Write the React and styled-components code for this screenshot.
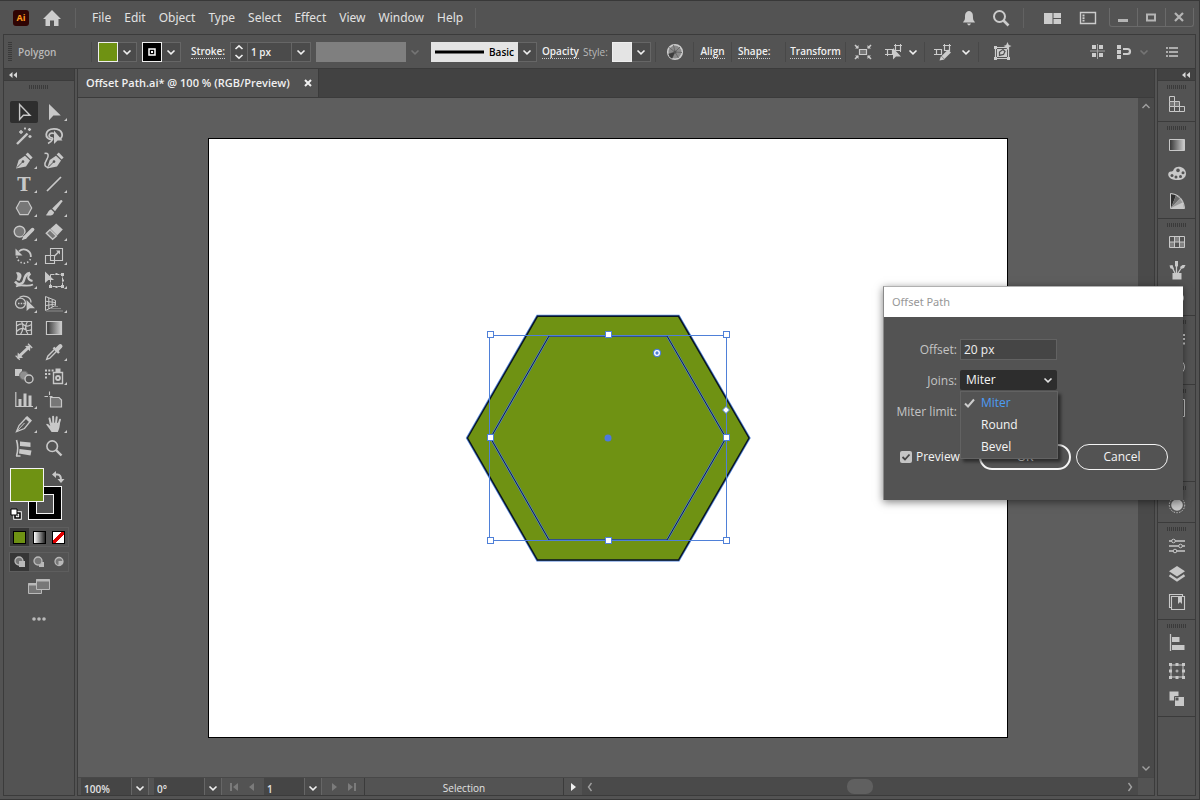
import React from "react";
import styled, { createGlobalStyle, css } from "styled-components";

const GlobalStyle = createGlobalStyle`
    * {
        box-sizing: border-box;
    }

    body {
        margin: 0;
        background-color: #535353;
        color: #e2e2e2;
        font-family: "Open Sans", "Noto Sans", sans-serif;
        font-size: 11px;
        line-height: 16px;
    }

    button, input, select {
        font: inherit;
        color: inherit;
        margin: 0;
        padding: 0;
        border: none;
        border-radius: 0;
        background: none;
        outline: none;
    }
`

const line = "#3b3b3b"
const edge = "#666666"
const field = "#454545"
const olive = "#6f9213"
const blue = "#4f80d8"

const Window = styled.div`
    position: relative;
    display: flex;
    flex-direction: column;
    min-height: 100vh;
    padding-bottom: 3px;
    border-top: 1px solid #383838;
    border-right: 1px solid #383838;
    border-bottom: 1px solid #383838;
    background-color: #535353;
    overflow: hidden;
`

const Svg = styled.svg`
    display: block;
    flex: none;
    fill: none;
    stroke: currentColor;

    .f {
        fill: currentColor;
        stroke: none;
    }

    .d {
        fill: #777777;
    }

    .k {
        fill: #535353;
        stroke: none;
    }
`

const Icon = ({ w = 20, h = 20, children }) => (
    <Svg width={w} height={h} viewBox={`0 0 ${w} ${h}`} aria-hidden="true">{children}</Svg>
)

const Chevron = () => (
    <Icon w={10} h={10}><path d="M1.5 3.5 5 6.8 8.5 3.5" strokeWidth="1.6" /></Icon>
)

/* menu bar */

const MenuBar = styled.header`
    display: flex;
    align-items: center;
    height: 33px;
    padding-left: 13px;
`

const Logo = styled.div`
    width: 16px;
    height: 16px;
    border-radius: 3px;
    background-color: #2f0403;
    color: #ff9a1f;
    font-size: 9px;
    font-weight: 700;
    text-align: center;
`

const IconButton = styled.button`
    display: flex;
    align-items: center;
    justify-content: center;
    width: 20px;
    height: 20px;
    flex: none;
    color: #cccccc;
`

const HomeButton = styled(IconButton)`
    margin: 0 13px 0 13px;
`

const Rule = styled.span`
    width: 1px;
    height: 20px;
    flex: none;
    background-color: ${props => props.$dark ? "#484848" : "#626262"};
`

const Menus = styled.nav`
    display: flex;
    gap: 13px;
    padding: 0 12px 0 16px;

    button {
        font-family: "Noto Sans", sans-serif;
        font-size: 12px;
    }
`

const MenuRight = styled.div`
    display: flex;
    align-items: center;
    margin-left: auto;
`

const Spacer = styled.span`
    width: ${props => props.$w}px;
    flex: none;
`

const WindowButtons = styled.div`
    display: flex;
    align-self: flex-start;
    margin-right: 5px;
    border: 1px solid #6a6a6a;
    border-top: none;
    border-radius: 0 0 3px 3px;

    button {
        width: 27px;
        height: 18px;
        color: #b4b4b4;
    }

    button + button {
        width: 28px;
        border-left: 1px solid #6a6a6a;
    }
`

/* control bar */

const ControlBar = styled.div`
    display: flex;
    align-items: center;
    height: 35px;
    margin: 0 3px;
    border: 1px solid ${line};
    font-size: 10px;
    font-weight: 600;
`

const Grip = styled.span`
    flex: none;
    ${props => props.$vertical ? css`
        width: 4px;
        height: 20px;
        background: repeating-linear-gradient(#3a3a3a 0 1px, transparent 1px 2px);
    ` : css`
        width: 20px;
        height: 4px;
        background: repeating-linear-gradient(90deg, #3a3a3a 0 1px, transparent 1px 2px);
    `}
`

const Cell = styled.div`
    display: flex;
    align-items: center;
    justify-content: ${props => props.$center ? "center" : "flex-start"};
    width: ${props => props.$w}px;
    flex: none;
    white-space: nowrap;
`

const Muted = styled.span`
    color: #b9b9b9;
    font-weight: ${props => props.$light ? 400 : 600};
`

const LinkLabel = styled.a`
    color: #f0f0f0;
    text-decoration: none;
    line-height: 13px;
    border-bottom: 1px dotted #c8c8c8;
`

const Combo = styled.div`
    display: flex;
    height: 20px;
    border: 1px solid ${edge};
    background-color: #4b4b4b;
`

const Drop = styled.button`
    display: flex;
    align-items: center;
    justify-content: center;
    width: 18px;
    flex: none;
    color: ${props => props.$dim ? "#757575" : "#f0f0f0"};
`

const Swatch = styled.button`
    display: flex;
    align-items: center;
    justify-content: center;
    width: 20px;
    height: 20px;
    margin: -1px 0 0 -1px;
    border: 1px solid #eeeeee;
    background-color: ${props => props.$color};
`

const ValueInput = styled.input`
    width: ${props => props.$w}px;
    padding-left: 3px;
    border: solid ${edge};
    border-width: 0 1px;
    color: #f0f0f0;
`

const Stepper = styled(Drop)`
    width: 16px;
`

const Profile = styled.div`
    width: 90px;
    height: 20px;
    background-color: #7f7f7f;
`

const BrushButton = styled.button`
    display: flex;
    align-items: center;
    width: 87px;
    height: 20px;
    gap: 5px;
    padding-left: 4px;
    margin: -1px 0 0 -1px;
    background-color: #e4e4e4;
    color: #000000;
`

const BarEnd = styled.div`
    display: flex;
    align-items: center;
    margin-left: auto;
    padding-right: 13px;
`

/* work area */

const Body = styled.div`
    display: flex;
    flex: 1;
    gap: 2px;
    margin: 0 3px;
`

const Panel = styled.aside`
    display: flex;
    flex-direction: column;
    width: ${props => props.$w}px;
    flex: none;
    border: solid ${line};
    border-width: 0 1px 1px;
`

const PanelHead = styled.div`
    display: flex;
    align-items: center;
    justify-content: ${props => props.$end ? "flex-end" : "flex-start"};
    height: 12px;
    padding: 0 4px;
    background-color: #424242;
    border-bottom: 1px solid ${line};
    color: #d8d8d8;
`

const ToolsInner = styled.div`
    display: flex;
    flex-direction: column;
    align-items: center;
    padding-top: 4px;
`

const ToolGrid = styled.div`
    display: grid;
    grid-template-columns: 28px 28px;
    gap: 2px;
    margin-top: 12px;
`

const Tool = styled.button`
    width: 28px;
    height: 22px;
    border-radius: 2px;
    background-color: ${props => props.$on ? "#2e2e2e" : "transparent"};
    color: #c8c8c8;
`

const Paints = styled.div`
    display: grid;
    grid-template-columns: 18px 16px 18px;
    grid-template-rows: 18px 16px 18px;
    align-self: flex-start;
    margin: 9px 0 2px 6px;
    color: #c8c8c8;
`

const FillPaint = styled.button`
    grid-area: 1 / 1 / 3 / 3;
    z-index: 1;
    border: 1px solid #f4f4f4;
    background-color: ${olive};
`

const StrokePaint = styled.button`
    grid-area: 2 / 2 / 4 / 4;
    border: 1px solid #f4f4f4;
    background-color: #000000;
    padding: 7px;

    &::after {
        content: "";
        display: block;
        height: 18px;
        border: 1px solid #f4f4f4;
        background-color: #535353;
    }
`

const SwapPaint = styled.button`
    grid-area: 1 / 3;
    padding-left: 8px;
`

const ResetPaint = styled.button`
    grid-area: 3 / 1;
    align-self: end;
    justify-self: start;
`

const ModeRow = styled.div`
    display: grid;
    grid-template-columns: 19px 20px 19px;
    height: 20px;
    margin-top: 5px;
    border: 1px solid #5e5e5e;
`

const Mode = styled.button`
    display: flex;
    align-items: center;
    justify-content: center;
    background-color: ${props => props.$on ? "#363636" : "transparent"};
    color: #b9b9b9;
`

const Chip = styled.span`
    width: 13px;
    height: 13px;
    border: 1px solid #000000;
    background: ${props => props.$bg};
`

const Extra = styled(Mode)`
    height: 20px;
    margin-top: ${props => props.$gap}px;
`

const Document = styled.main`
    display: flex;
    flex-direction: column;
    flex: 1;
    min-width: 0;
    border: 1px solid ${line};
    border-top: none;
`

const Tabs = styled.div`
    display: flex;
    height: 29px;
    background-color: #424242;
    border-bottom: 1px solid ${line};
`

const Tab = styled.div`
    display: flex;
    align-items: center;
    justify-content: space-between;
    width: 241px;
    padding: 0 2px 0 8px;
    background-color: #535353;
    border-right: 1px solid ${line};
    color: #f0f0f0;
    font-weight: 600;
    white-space: nowrap;

    button {
        padding: 0 4px;
    }
`

const Stage = styled.div`
    display: flex;
    flex: 1;
`

const Canvas = styled.div`
    display: flex;
    align-items: center;
    justify-content: center;
    flex: 1;
    min-width: 0;
    background-color: #5e5e5e;
`

const Artboard = styled.div`
    width: 800px;
    max-width: 90%;
    background-color: #ffffff;
    border: 1px solid #000000;

    svg {
        display: block;
        width: 100%;
        height: auto;
    }
`

const VScroll = styled.div`
    display: flex;
    flex-direction: column;
    justify-content: space-between;
    align-items: center;
    width: 16px;
    padding: 3px 0 4px;
    background-color: #4a4a4a;
    color: #a0a0a0;
`

const StatusBar = styled.div`
    display: flex;
    height: 18px;
    border-top: 1px solid #484848;
    font-size: 10px;
    font-weight: 600;
`

const StatusField = styled.div`
    display: flex;
    flex: none;
    margin-left: ${props => props.$gap}px;
    background-color: ${field};

    input {
        width: ${props => props.$w}px;
        padding: 4px 0 0 3px;
    }

    button {
        padding-top: 3px;
        border: solid ${edge};
        border-width: 0 1px;
        background-color: #4b4b4b;
    }
`

const StatusNav = styled.div`
    display: flex;
    align-items: center;
    justify-content: center;
    gap: 8px;
    width: 42px;
    flex: none;
    color: #7b7b7b;
`

const StatusText = styled.div`
    width: 200px;
    flex: none;
    border: solid ${line};
    border-width: 0 1px;
    color: #e2e2e2;
    font-weight: 400;
    line-height: 21px;
    text-align: center;
`

const HScroll = styled.div`
    display: flex;
    align-items: center;
    justify-content: space-between;
    flex: 1;
    margin-right: 16px;
    padding: 0 4px;
    background-color: #4a4a4a;
    color: #a0a0a0;
`

const Thumb = styled.span`
    width: 26px;
    height: 15px;
    border-radius: 7px;
    background-color: #606060;
`

const Dock = styled.div`
    display: flex;
    flex-direction: column;
    align-items: center;
    padding: 4px 0 3px;
    border-bottom: 1px solid ${line};
    color: #c8c8c8;
`

const DockButton = styled.button`
    display: flex;
    align-items: center;
    justify-content: center;
    width: 28px;
    height: 28px;
`

const DockIcons = styled.div`
    margin-top: 1px;
`

/* dialog */

const Dialog = styled.form`
    position: absolute;
    top: 285px;
    right: 16px;
    width: 300px;
    background-color: #535353;
    border-left: 1px solid #8a8a8a;
    border-top: 1px solid #b0b0b0;
    box-shadow: 0 2px 8px rgba(0, 0, 0, .5);
    font-size: 12px;

    h2 {
        margin: 0;
        padding: 0 8px;
        background-color: #ffffff;
        color: #979797;
        font-family: "Noto Sans", sans-serif;
        font-size: 11px;
        font-weight: 400;
        line-height: 30px;
    }
`

const Fields = styled.div`
    display: grid;
    grid-template-columns: 73px 97px;
    grid-auto-rows: 21px;
    gap: 10px 3px;
    padding: 22px 0 0;

    label {
        color: #c4c4c4;
        line-height: 21px;
        text-align: right;
        white-space: nowrap;
    }
`

const TextInput = styled.input`
    width: 100%;
    height: 21px;
    padding-left: 3px;
    border: 1px solid #626262;
    background-color: ${field};
    color: #f0f0f0;
`

const SelectBox = styled.div`
    position: relative;

    select {
        appearance: none;
        width: 100%;
        height: 20px;
        padding-left: 6px;
        border-radius: 2px;
        background-color: #2d2d2d;
        color: #f4f4f4;
    }

    > svg {
        position: absolute;
        top: 5px;
        right: 4px;
        pointer-events: none;
    }
`

const Options = styled.ul`
    position: absolute;
    z-index: 2;
    top: 21px;
    left: 0;
    width: 98px;
    margin: 0;
    padding: 0;
    list-style: none;
    background-color: #535353;
    border: 1px solid #626262;
    box-shadow: 3px 3px 3px rgba(0, 0, 0, .45);
`

const Option = styled.li`
    display: flex;
    align-items: center;
    gap: 6px;
    height: 22px;
    padding-left: 3px;
    color: ${props => props.$on ? "#4b9cf5" : "#f4f4f4"};

    svg {
        color: #cccccc;
        visibility: ${props => props.$on ? "visible" : "hidden"};
    }
`

const Footer = styled.div`
    display: flex;
    align-items: center;
    gap: 5px;
    padding: 22px 15px 30px 16px;
`

const Check = styled.label`
    display: flex;
    align-items: center;
    gap: 4px;
    margin-right: auto;
    color: #f4f4f4;

    input {
        appearance: none;
        width: 12px;
        height: 12px;
        border-radius: 2px;
        background: #c4c4c4 url("data:image/svg+xml,%3Csvg xmlns='http://www.w3.org/2000/svg' viewBox='0 0 12 12'%3E%3Cpath d='M2.5 6 5 8.5 9.5 3.5' fill='none' stroke='%23444' stroke-width='1.8'/%3E%3C/svg%3E");
    }
`

const Pill = styled.button`
    width: 92px;
    height: 26px;
    border: ${props => props.$main ? 2 : 1}px solid #f4f4f4;
    border-radius: 13px;
    color: #f4f4f4;
`

/* tool drawings, each on a 28 x 22 button */

const plus = (x, y, r) => <path d={`M${x - r} ${y}h${2 * r}M${x} ${y - r}v${2 * r}`} strokeWidth="1.4" />

const penShape = (
    <>
        <path className="f" d="M6 19.5 8.7 11 15 6.8 20 11.6 16 17.5z" />
        <path className="f" d="M15.6 5.6 17.8 3.4 22.6 8.4 20.6 10.4z" />
        <path d="M7 18.5 12.5 13" stroke="#535353" strokeWidth="1" />
        <circle className="k" cx="13" cy="12.6" r="1.3" />
    </>
)

const tools = [
    { name: "Selection", on: true, art: <path d="M9.6 3.5V18.4L13.4 14.2H20z" strokeWidth="1.4" /> },
    { name: "Direct Selection", more: true, art: <path className="f" d="M9 3V19.3L13.4 14.6H20.8z" /> },
    { name: "Magic Wand", art: <><path d="M7 19 17.5 8.5" strokeWidth="2.4" />{plus(11, 7, 2)}{plus(19.5, 4.5, 1.6)}{plus(20, 11.5, 1.6)}{plus(15, 3.5, 1)}</> },
    {
        name: "Lasso", art: <>
            <path d="M12 14.5C4 14.5 4 4 14 3.8 23 3.8 24 12 19.5 14" strokeWidth="1.8" />
            <path d="M14 8.5C9 7 7.5 12 11 12.5 14 12.5 13 16 8 18.5" strokeWidth="1.6" />
            <path className="f" d="M14 5.5V19L17.6 15.4H22.5z" />
        </>
    },
    { name: "Pen", more: true, art: penShape },
    { name: "Curvature", art: <><g transform="translate(1 0)">{penShape}</g><path d="M4.5 4.5C9 3.5 9 7 6.5 11 4 15 4 18 9 18.5" strokeWidth="1.5" /></> },
    { name: "Type", more: true, art: <text className="f" x="14" y="18" textAnchor="middle" fontFamily="DejaVu Serif, serif" fontWeight="700" fontSize="18">T</text> },
    { name: "Line Segment", more: true, art: <path d="M7 18 21 4" strokeWidth="1.7" /> },
    { name: "Polygon", more: true, art: <path className="d" d="M6.3 11 10 4.3H18L21.7 11 18 17.7H10z" strokeWidth="1.2" /> },
    {
        name: "Paintbrush", more: true, art: <>
            <path className="f" d="M12.2 11.6 20.5 3.3Q22.5 2.5 22.4 4.6L15 14.2z" />
            <path className="f" d="M11.3 12.6 14.1 15.2C13.4 19 9 19 5.8 18.2 8 17 7.8 13.2 11.3 12.6z" />
        </>
    },
    {
        name: "Shaper", more: true, art: <>
            <circle className="d" cx="9.6" cy="10.6" r="5.4" strokeWidth="1.4" />
            <path d="M14.4 16.8 22.8 8.4" strokeWidth="5.4" stroke="#535353" />
            <path d="M15.4 15.8 22.6 8.6" strokeWidth="3.6" strokeLinecap="round" />
            <path className="f" d="M11.8 19.2 13.6 14.6 16.6 17.6z" />
        </>
    },
    { name: "Eraser", more: true, art: <><path className="f" d="M10.4 7.8 16.2 2.4 22.8 8.6 17.2 14.4z" /><path d="M10 8.8 6.3 12.2 12.6 18.3 16.4 14.9z" className="d" strokeWidth="1.4" /></> },
    {
        name: "Rotate", more: true, art: <>
            <path d="M9 6.4A7 7 0 0 1 20.8 12" strokeWidth="1.8" />
            <path d="M20.4 14A7 7 0 0 1 7 11.5" strokeWidth="1.6" strokeDasharray="1.4 2" />
            <path className="f" d="M5.5 3.5V10.4H12.5z" />
        </>
    },
    { name: "Scale", more: true, art: <><path d="M10.5 3.5H22.5V15.5H10.5zM5.5 10.5H14.5V18.5H5.5z" strokeWidth="1.1" /><path d="M14.5 11 19 6.5" strokeWidth="1.5" /><path className="f" d="M16 5.5H20V9.5z" /></> },
    {
        name: "Width", more: true, art: <>
            <path className="f" d="M6 3.5C9 2.5 12 4.5 11.5 7.5 11.2 9.5 10 10.5 9.5 12L6.5 11C7 9 8.5 7.5 6 3.5z" />
            <path d="M5 12.5C8 17 13 15 14 11 15 7 16 4.5 20 4" strokeWidth="2.4" />
            <path d="M20.5 4.5C16.5 8 18 11 22.5 12" strokeWidth="2" />
            <path d="M6 17.5C11 14.5 17 18.5 23 15.5" strokeWidth="1.8" />
        </>
    },
    {
        name: "Free Transform", more: true, art: <>
            <path d="M10.5 5.5H22.5V17.5H10.5z" strokeWidth="1" strokeDasharray="4 1" />
            <path className="f" d="M9 16h3v3H9zM21 16h3v3h-3zM21 4h3v3h-3zM15.5 4h2v2h-2zM15.5 17h2v2h-2zM22 10.5h2v2h-2zM5 2.5V14L8.4 11H14z" />
        </>
    },
    {
        name: "Shape Builder", more: true, art: <>
            <circle cx="10.5" cy="10.2" r="5" strokeWidth="1.3" />
            <path d="M9.5 4.5C13 1.5 21 3.5 21 9.5" strokeWidth="1.3" />
            <path d="M8 10.4H16" strokeDasharray="1.5 1.2" strokeWidth="1.5" />
            <path className="f" d="M16.6 7V18L19.8 15.2H25z" />
        </>
    },
    {
        name: "Perspective Grid", more: true, art: <>
            <path d="M5.5 3.5 15.5 7.5V12.5L5.5 17.5zM8.8 5V15.8M12.2 6.3V14M5.5 8.2 15.5 9.6M5.5 12.6 15.5 11" />
            <path d="M15 13.5H18M11 15.6H21M6 18H23" stroke="#8c8c8c" />
        </>
    },
    { name: "Mesh", art: <path d="M6.5 4.5H21.5V17.5H6.5zM6.5 9Q12 5.5 14 8 17 10.5 21.5 7.5M6.5 14.5Q12 9.5 15 12.5 18 14.5 21.5 12.5M11.5 4.5Q15 10 10.5 17.5M17.5 4.5Q13.5 10 18 17.5" strokeWidth="1.2" /> },
    { name: "Gradient", art: <path d="M6.5 4.5H21.5V17.5H6.5z" fill="url(#fade)" strokeWidth="1.2" /> },
    {
        name: "Measure", art: <>
            <path d="M10 14.5 18 7" strokeWidth="3" />
            <path className="f" d="M7.2 17.4 7.8 11.6 13 16.8zM20.6 4.4 20 10.2 15 5z" />
            <path d="M18 2.8 22.2 7M5.6 14.6 9.8 18.8" strokeWidth="1.3" />
        </>
    },
    {
        name: "Eyedropper", more: true, art: <>
            <path d="M15.4 7.6 7.8 15.2 6.7 18.3 9.8 17.2 17.4 9.6" strokeWidth="1.4" />
            <path d="M13.5 6.5 19 12" strokeWidth="2.4" />
            <path d="M17 8.6 20.3 5.3" strokeWidth="4.4" strokeLinecap="round" />
        </>
    },
    { name: "Blend", art: <><path className="f" d="M5 4H12V11H5z" /><circle cx="14" cy="10.5" r="4.4" fill="#8f8f8f" stroke="#6a6a6a" /><circle cx="19" cy="14" r="4" strokeWidth="1.4" fill="#535353" /></> },
    {
        name: "Symbol Sprayer", more: true, art: <>
            <path d="M13.5 7.5H22.5V18.5H13.5z" strokeWidth="1.4" />
            <circle cx="18" cy="13" r="2" strokeWidth="1.8" />
            <path className="f" d="M15.5 3.5H20.5V7H15.5zM5 4.5h2v2H5zM8.3 4.5h2v2h-2zM11.6 4.5h2v2h-2zM5 8h2v2H5zM8.3 8h2v2h-2zM5 11.5h2v2H5z" />
        </>
    },
    { name: "Column Graph", more: true, art: <><path d="M5.8 3V17.5H23" strokeWidth="1.2" /><path className="f" d="M8.5 10H11.5V17H8.5zM13.5 4.5H16.5V17H13.5zM18.5 6.5H21.5V17H18.5z" /></> },
    { name: "Artboard", art: <><path className="d" d="M10.5 8.5H19L21.5 11V18H10.5z" strokeWidth="1.2" /><path d="M4.5 7.5H8M9.5 2.5V6M9.5 7.5H12.5" strokeWidth="1.1" /></> },
    { name: "Slice", more: true, art: <><path d="M6.5 18.5 9 12.5 16.5 4.5 20.5 8 14.5 15.5z" strokeWidth="1.3" /><path className="f" d="M15 5.2 17.2 3 22 7.6 19.8 9.8z" /><path d="M7 18 14.5 10" strokeWidth="1" /></> },
    {
        name: "Hand", more: true, art: <>
            <path d="M10.8 11 9.5 5.5M13.3 10 13.1 3.7M16 10 16.7 4.2M18.5 11.5 20 6.8" strokeWidth="2" strokeLinecap="round" />
            <path className="f" d="M9.7 9.8H19.8C20 14 19 16.5 17.8 19H11.6C10 16.5 8 14 6.2 11.5 6.4 10 8 10.4 10.2 13z" />
        </>
    },
    { name: "Print Tiling", art: <><path className="f" d="M10 4.5 20.5 5.5V10L10 9zM9.5 12 21.5 13.5 20.5 18.5 9 16.5z" /><path d="M6.5 3Q9 11 6.5 19M6 19H10.5" strokeWidth="1.6" /></> },
    { name: "Zoom", art: <><circle cx="12.2" cy="9.2" r="5.3" strokeWidth="1.6" /><path d="M16 13 21.5 18.5" strokeWidth="2.4" /></> },
]

/* panel drawings, 20 x 20 */

const docks = [
    [
        { name: "Pathfinder Grid", art: <><path d="M2.5 2.5h5v5h-5zM2.5 12.5h5v5h-5zM7.5 12.5h5v5h-5zM12.5 12.5h5v5h-5z" /><path className="d" d="M2.5 7.5h5v5h-5zM7.5 7.5h5v5h-5z" /></> },
    ],
    [
        { name: "Gradient", art: <path d="M2.5 4.5H17.5V15.5H2.5z" fill="url(#fade)" /> },
        {
            name: "Color", art: <>
                <path className="f" d="M7 6C10 1.5 19 4 19 10.5 19 16.5 12 18 6 16.5 0 15 0 8.5 4 8.5 6.5 8.5 6 7.5 7 6z" />
                <circle className="k" cx="5" cy="12.4" r="1.5" /><circle className="k" cx="9" cy="14" r="1.5" />
                <circle className="k" cx="13.5" cy="13.4" r="1.5" /><circle className="k" cx="16" cy="9.8" r="1.5" /><circle className="k" cx="11" cy="7.4" r="1.8" />
            </>
        },
        {
            name: "Color Guide", art: <>
                <path className="f" d="M4 17V3C11 3 17 9 17 17z" />
                <path d="M4 17V3Q7 3 9 4.5z" fill="#2e2e2e" stroke="none" /><path d="M4 17 9 4.5 13 7.5z" fill="#6a6a6a" stroke="none" /><path d="M4 17 13 7.5 15.5 11.5z" fill="#999999" stroke="none" />
                <path d="M3.5 17.5V2.5C12 3 17 9 17.5 17.5z" />
            </>
        },
    ],
    [
        { name: "Swatches", art: <><path d="M2.5 4.5H17.5V15.5H2.5zM7.5 4.5V15.5M12.5 4.5V15.5M2.5 10H17.5" /><path className="f" d="M8 5h4v5H8zM13 10h4v5h-4zM3 10h4v5H3z" opacity=".4" /></> },
        {
            name: "Brushes", art: <>
                <path className="f" d="M5.5 13H14.5V19.5H5.5zM8 1H11V6L9.5 7.5 8 6zM2.5 5.5 5.5 5 7 9 3.5 8.5zM13 7 15.5 5 18.5 5 17 8 14 9z" />
                <path d="M9.5 7V13M5.5 8 8 13M14 8.5 11 13" strokeWidth="1.3" />
            </>
        },
        { name: "Symbols", art: <circle className="f" cx="12" cy="10" r="5" /> },
    ],
    [
        { name: "Stroke", art: <path d="M3 6H18M3 10H18M3 14.5H18" strokeWidth="2" /> },
        { name: "Transparency", art: <circle cx="10" cy="10" r="7.5" /> },
    ],
    [
        { name: "Document Info", art: <path d="M3.5 1.5H17.5V18.5H3.5z" /> },
        { name: "Graphic Styles", art: <path d="M3.5 4.5H14.5V15.5H3.5z" /> },
        { name: "Properties", art: <path d="M3.5 4.5H14.5V15.5H3.5z" /> },
    ],
    [
        { name: "Appearance", art: <><circle className="f" cx="10" cy="10" r="5.8" /><circle cx="10" cy="10" r="7.7" strokeDasharray="1.5 1.3" /></> },
    ],
    [
        {
            name: "Adjustments", art: <>
                <path d="M2 5H18M2 10H18M2 15H18" strokeWidth="1.3" />
                <circle cx="6.5" cy="5" r="1.8" fill="#535353" /><circle cx="13.5" cy="10" r="1.8" fill="#535353" /><circle cx="8" cy="15" r="1.8" fill="#535353" />
            </>
        },
        { name: "Layers", art: <><path className="f" d="M10 2 18 7.2 10 12.4 2 7.2z" /><path d="M2.5 11.3 10 16.2 17.5 11.3" strokeWidth="2.4" /></> },
        { name: "Libraries", art: <><path d="M4.5 4.5H17.5V17.5H4.5zM15.5 4V2.5H2.5V15.5H4" strokeWidth="1.1" /><path className="f" d="M11 5H15V12L13 10 11 12z" /></> },
    ],
    [
        { name: "Align", art: <><path d="M3.5 1V18" strokeWidth="1.3" /><path className="f" d="M5 4H12.5V9H5zM5 12H17.5V17H5z" /></> },
        { name: "Transform", art: <><path d="M4 4H16V16H4zM10 8.5V11.5M8.5 10H11.5" /><path className="f" d="M2 2h3v3H2zM8.5 2h3v3h-3zM15 2h3v3h-3zM2 8.5h3v3H2zM15 8.5h3v3h-3zM2 15h3v3H2zM8.5 15h3v3h-3zM15 15h3v3h-3z" /></> },
        { name: "Pathfinder", art: <><path className="f" d="M2.5 2.5H11.5V11.5H2.5z" /><path d="M7.5 7.5H17.5V17.5H7.5z" fill="currentColor" stroke="#535353" /><path className="k" d="M8.5 8.5H11.5V11.5H8.5z" /></> },
    ],
]

const Collapse = () => (
    <Icon w={10} h={8}><path className="f" d="M4.5 1V7L1 4zM9 1V7L5.5 4z" /></Icon>
)

const handles = [[281, 196], [399, 196], [517, 196], [281, 299], [517, 299], [281, 402], [399, 402], [517, 402]]

const outerHex = "M258.5 299 328.5 177.3H469.5L540 299 469.5 421H328.5z"
const innerHex = "M281.5 299 340 197H458L517 299 458 401H340z"

const Drawing = () => (
    <svg viewBox="0 0 798 598" role="img" aria-label="Hexagon with offset path">
        <path d={outerHex} fill={olive} stroke={blue} strokeWidth="3" />
        <path d={outerHex} fill={olive} stroke="#0a1420" strokeWidth="1.4" />
        <path d={innerHex} fill="none" stroke={blue} strokeWidth="2.2" />
        <path d={innerHex} fill="none" stroke="#14233a" strokeWidth="1" />
        <path d="M280.5 196.5H517.5V401.5H280.5z" fill="none" stroke={blue} />
        {handles.map(([x, y]) => (
            <rect key={`${x}-${y}`} x={x - 2.5} y={y - 3.5} width="6" height="6" fill="#ffffff" stroke={blue} />
        ))}
        <circle cx="399" cy="299" r="3.5" fill="#4d78e0" />
        <circle cx="448" cy="214" r="3.2" fill={blue} stroke={blue} strokeWidth="2" />
        <circle cx="448" cy="214" r="2.3" fill={blue} stroke="#ffffff" strokeWidth="1.3" />
        <path d="M517 267.5 520.5 271 517 274.5 513.5 271z" fill="#ffffff" stroke={blue} />
    </svg>
)

const TopMenu = () => (
    <MenuBar>
        <Logo>Ai</Logo>
        <HomeButton type="button" aria-label="Home">
            <Icon><path className="f" d="M10 2 19 11H16.5V18H12V12.5H8V18H3.5V11H1z" /></Icon>
        </HomeButton>
        <Rule />
        <Menus>
            {["File", "Edit", "Object", "Type", "Select", "Effect", "View", "Window", "Help"].map(item => (
                <button type="button" key={item}>{item}</button>
            ))}
        </Menus>
        <Rule />
        <MenuRight>
            <IconButton type="button" aria-label="Notifications">
                <Icon><path className="f" d="M10 3C14 3.5 14 7 14 10 14 12.5 15.5 13 16 14.5H4C4.5 13 6 12.5 6 10 6 7 6 3.5 10 3zM8 15.5H12Q11 17.5 10 17.5 9 17.5 8 15.5z" /></Icon>
            </IconButton>
            <Spacer $w={12} />
            <IconButton type="button" aria-label="Search">
                <Icon><circle cx="8.5" cy="8.5" r="5.5" strokeWidth="2" /><path d="M12.5 12.5 17.5 17.5" strokeWidth="2.6" /></Icon>
            </IconButton>
            <Spacer $w={12} />
            <Rule />
            <Spacer $w={19} />
            <IconButton type="button" aria-label="Arrange Documents">
                <Icon><path className="f" d="M1 5H9.5V16H1zM10.5 5H18V10H10.5zM10.5 11H18V16H10.5z" /></Icon>
            </IconButton>
            <Spacer $w={15} />
            <IconButton type="button" aria-label="Workspace">
                <Icon><path d="M2.5 4.5H17.5V15.5H2.5z" strokeWidth="1.4" /><path d="M5.5 6.5V13.5" strokeWidth="2" strokeDasharray="2 .7" /></Icon>
            </IconButton>
            <Spacer $w={11} />
            <WindowButtons>
                <button type="button" aria-label="Minimize"><Icon w={26} h={18}><path className="f" d="M8 11H18V14H8z" /></Icon></button>
                <button type="button" aria-label="Maximize"><Icon w={26} h={18}><path d="M9 6.5H17V12.5H9z" strokeWidth="2" /></Icon></button>
                <button type="button" aria-label="Close"><Icon w={26} h={18}><path d="M9 5 17 13M17 5 9 13" strokeWidth="2.2" /></Icon></button>
            </WindowButtons>
        </MenuRight>
    </MenuBar>
)

const Controls = () => (
    <ControlBar>
        <Cell $w={14}><Spacer $w={4} /><Grip $vertical /></Cell>
        <Cell $w={73}><Muted>Polygon</Muted></Cell>
        <Rule $dark />
        <Spacer $w={6} />
        <Combo><Swatch type="button" $color={olive} aria-label="Fill" /><Drop type="button" aria-label="Fill options"><Chevron /></Drop></Combo>
        <Spacer $w={5} />
        <Combo>
            <Swatch type="button" $color="#000000" aria-label="Stroke">
                <Icon w={8} h={8}><path d="M1 1H7V7H1z" stroke="#ffffff" strokeWidth="1.5" /><path d="M3 3H5V5H3z" fill="#ffffff" stroke="none" /></Icon>
            </Swatch>
            <Drop type="button" aria-label="Stroke options"><Chevron /></Drop>
        </Combo>
        <Spacer $w={10} />
        <Cell $w={39}><LinkLabel href="#stroke">Stroke:</LinkLabel></Cell>
        <Combo>
            <Stepper type="button" aria-label="Step weight">
                <Icon w={10} h={16}><path d="M1.5 5 5 1.8 8.5 5M1.5 11 5 14.2 8.5 11" strokeWidth="1.6" /></Icon>
            </Stepper>
            <ValueInput $w={45} defaultValue="1 px" aria-label="Stroke weight" />
            <Drop type="button" aria-label="Weights"><Chevron /></Drop>
        </Combo>
        <Spacer $w={5} />
        <Profile />
        <Drop type="button" $dim disabled aria-label="Profiles"><Chevron /></Drop>
        <Spacer $w={7} />
        <Combo>
            <BrushButton type="button"><Icon w={49} h={4}><path d="M0 2H49" strokeWidth="3" /></Icon>Basic</BrushButton>
            <Drop type="button" aria-label="Brushes"><Chevron /></Drop>
        </Combo>
        <Spacer $w={5} />
        <Cell $w={41}><LinkLabel href="#opacity">Opacity</LinkLabel></Cell>
        <Cell $w={29}><Muted $light>Style:</Muted></Cell>
        <Combo><Swatch type="button" $color="#e4e4e4" aria-label="Style" /><Drop type="button" aria-label="Styles"><Chevron /></Drop></Combo>
        <Spacer $w={4} />
        <Rule $dark />
        <Cell $w={37} $center>
            <IconButton type="button" aria-label="Recolor Artwork">
                <Icon>
                    <circle cx="10" cy="10" r="7.3" fill="#8a8a8a" strokeWidth="1.6" />
                    <path d="M10 10 4 5.5M10 10 8.5 3M10 10 15 5M10 10 17 10.5M10 10 13.5 16M10 10 7 16.5M10 10 3.5 12" stroke="#6a6a6a" />
                    <path d="M10 10 3.5 12 4.6 15 7 16.5z" fill="#3c3c3c" stroke="none" />
                    <circle cx="10" cy="10" r="1.5" fill="#555555" stroke="none" />
                </Icon>
            </IconButton>
        </Cell>
        <Rule $dark />
        <Cell $w={37} $center><LinkLabel href="#align">Align</LinkLabel></Cell>
        <Rule $dark />
        <Spacer $w={6} />
        <Cell $w={47}><LinkLabel href="#shape">Shape:</LinkLabel></Cell>
        <Rule $dark />
        <Cell $w={59} $center><LinkLabel href="#transform">Transform</LinkLabel></Cell>
        <Rule $dark />
        <Spacer $w={7} />
        <IconButton type="button" aria-label="Isolate">
            <Icon>
                <path className="d" d="M6.5 7.5H13.5V12.5H6.5z" strokeWidth="1.2" />
                <path d="M2 3 5 6M18 3 15 6M2 17 5 14M18 17 15 14" strokeWidth="1.6" />
                <path className="f" d="M5.5 3V6.5H2zM14.5 3V6.5H18zM5.5 17V13.5H2zM14.5 17V13.5H18z" />
            </Icon>
        </IconButton>
        <Spacer $w={11} />
        <IconButton type="button" aria-label="Select Similar">
            <Icon>
                <path d="M3.5 7.5H8.5V12.5H3.5zM11.5 3.5H16.5V8.5H11.5z" strokeWidth="1.2" />
                <path d="M1 7.5H3M1 12.5H3M3.5 14V12M10 3.5H18M16.5 2V10M11.5 2V4" />
                <path className="f" d="M9 6V17.5L12 14.5H17z" />
            </Icon>
        </IconButton>
        <Drop type="button" aria-label="Similar options"><Chevron /></Drop>
        <Spacer $w={2} />
        <Rule $dark />
        <Spacer $w={8} />
        <IconButton type="button" aria-label="Edit Similar">
            <Icon>
                <path d="M3.5 7.5H8.5V12.5H3.5zM11.5 3.5H16.5V8.5H11.5z" strokeWidth="1.2" />
                <path d="M1 7.5H3M1 12.5H3M10 3.5H18M16.5 2V8M11.5 2V4" />
                <path d="M10 15.5 16.5 9" strokeWidth="4" /><path className="f" d="M6.5 18.5 8 14 11.5 17.5z" />
            </Icon>
        </IconButton>
        <Spacer $w={4} />
        <Drop type="button" aria-label="Edit options"><Chevron /></Drop>
        <Spacer $w={3} />
        <Rule $dark />
        <Spacer $w={13} />
        <IconButton type="button" aria-label="Mockup">
            <Icon>
                <path d="M3.5 5.5H16.5V16.5H3.5z" strokeWidth="1.2" />
                <path className="f" d="M5 7H15V15H5zM2 4h3v3H2zM2 15h3v3H2zM15 15h3v3h-3z" />
                <path d="M7.5 13.5V10L11 7.5 13 9.5 11.5 12.5z" stroke="#535353" strokeWidth="1.3" />
                <path className="f" d="M15.5 0 16.8 3 19.5 4 16.8 5.2 15.5 8 14.2 5.2 11.5 4 14.2 3z" />
            </Icon>
        </IconButton>
        <BarEnd>
            <IconButton type="button" aria-label="Snap to Grid">
                <Icon><path className="f" d="M4 3h4v4H4zM11 3h4v4h-4zM4 11h4v4H4zM11 11h4v4h-4z" /><path d="M9.5 2V17M2 9H17" stroke="#a0a0a0" /></Icon>
            </IconButton>
            <Spacer $w={7} />
            <IconButton type="button" aria-label="Snap to Glyph">
                <Icon><path className="f" d="M2 3h4v4H2zM2 8h4v4H2zM2 13h4v4H2z" /><path d="M8 7H12.5A2.5 2.5 0 0 1 12.5 12H8" strokeWidth="2.2" /></Icon>
            </IconButton>
            <Drop type="button" $dim aria-label="Snap options"><Chevron /></Drop>
            <Spacer $w={9} />
            <IconButton type="button" aria-label="Panel menu">
                <Icon><path d="M7 6H16M7 10H16M7 14H16" strokeWidth="1.4" /><path d="M4 6H6M4 10H6M4 14H6" strokeWidth="1.6" /></Icon>
            </IconButton>
        </BarEnd>
    </ControlBar>
)

const Toolbox = () => (
    <Panel $w={72}>
        <PanelHead><Collapse /></PanelHead>
        <ToolsInner>
            <Grip />
            <ToolGrid>
                {tools.map(tool => (
                    <Tool type="button" key={tool.name} $on={tool.on} aria-label={tool.name}>
                        <Icon w={28} h={22}>{tool.art}{tool.more && <path className="f" d="M27 17V20H24z" />}</Icon>
                    </Tool>
                ))}
            </ToolGrid>
            <Paints>
                <FillPaint type="button" aria-label="Fill" />
                <StrokePaint type="button" aria-label="Stroke" />
                <SwapPaint type="button" aria-label="Swap">
                    <Icon w={13} h={13}><path d="M2.5 3.5H5.5Q9 3.5 9 9" strokeWidth="2" /><path className="f" d="M4 0V7L0 3.5zM5.5 8H12.5L9 12z" /></Icon>
                </SwapPaint>
                <ResetPaint type="button" aria-label="Default">
                    <Icon w={12} h={12}>
                        <path d="M5 5H10V10H5z" stroke="#ffffff" strokeWidth="3.5" /><path d="M5 5H10V10H5z" stroke="#000000" strokeWidth="1.6" />
                        <path d="M1 1H7V7H1z" fill="#ffffff" stroke="#000000" />
                    </Icon>
                </ResetPaint>
            </Paints>
            <ModeRow>
                <Mode type="button" $on aria-label="Color"><Chip $bg={olive} /></Mode>
                <Mode type="button" aria-label="Gradient"><Chip $bg="linear-gradient(90deg, #ffffff, #222222)" /></Mode>
                <Mode type="button" aria-label="None"><Chip $bg="linear-gradient(135deg, #ffffff 38%, #e00000 38% 62%, #ffffff 62%)" /></Mode>
            </ModeRow>
            <ModeRow>
                <Mode type="button" $on aria-label="Draw Normal"><Icon w={12} h={12}><circle className="d" cx="5" cy="5" r="4" strokeWidth="1.3" /><path className="f" d="M5 5H11V11H5z" /></Icon></Mode>
                <Mode type="button" aria-label="Draw Behind"><Icon w={12} h={12}><path className="f" d="M6 6H11V11H6z" /><circle cx="5" cy="5" r="4" strokeWidth="1.3" fill="#777777" /></Icon></Mode>
                <Mode type="button" aria-label="Draw Inside"><Icon w={12} h={12}><circle className="d" cx="6" cy="5.5" r="4" strokeWidth="1.3" /><path className="f" d="M5.5 5H10V7L7.5 9.5H5.5z" /></Icon></Mode>
            </ModeRow>
            <Extra type="button" $gap={5} aria-label="Screen Mode">
                <Icon w={24} h={18}><path className="d" d="M1.5 5.5H14.5V15.5H1.5z" /><path d="M1 6.5H14" strokeWidth="2" /><path className="d" d="M9.5 1.5H22.5V11.5H9.5z" /><path d="M9 2.5H23" strokeWidth="2" /></Icon>
            </Extra>
            <Extra type="button" $gap={12} aria-label="Edit Toolbar">
                <Icon w={16} h={6}><circle className="f" cx="3" cy="3" r="1.8" /><circle className="f" cx="8" cy="3" r="1.8" /><circle className="f" cx="13" cy="3" r="1.8" /></Icon>
            </Extra>
        </ToolsInner>
    </Panel>
)

const RightDock = () => (
    <Panel $w={39}>
        <PanelHead $end><Collapse /></PanelHead>
        {docks.map((group, index) => (
            <Dock key={index}>
                <Grip />
                <DockIcons>
                    {group.map(item => (
                        <DockButton type="button" key={item.name} aria-label={item.name}><Icon>{item.art}</Icon></DockButton>
                    ))}
                </DockIcons>
            </Dock>
        ))}
    </Panel>
)

const Status = () => (
    <StatusBar>
        <StatusField $w={50} $gap={3}><input defaultValue="100%" aria-label="Zoom" /><Drop type="button" aria-label="Zoom levels"><Chevron /></Drop></StatusField>
        <StatusField $w={50} $gap={5}><input defaultValue="0°" aria-label="Rotation" /><Drop type="button" aria-label="Rotations"><Chevron /></Drop></StatusField>
        <StatusNav>
            <Icon w={9} h={10}><path className="f" d="M0 1H2V9H0zM8 1V9L3 5z" /></Icon>
            <Icon w={9} h={10}><path className="f" d="M7 1V9L2 5z" /></Icon>
        </StatusNav>
        <StatusField $w={40} $gap={0}><input defaultValue="1" aria-label="Artboard" /><Drop type="button" aria-label="Artboards"><Chevron /></Drop></StatusField>
        <StatusNav>
            <Icon w={9} h={10}><path className="f" d="M2 1V9L7 5z" /></Icon>
            <Icon w={9} h={10}><path className="f" d="M1 1V9L6 5zM7 1H9V9H7z" /></Icon>
        </StatusNav>
        <StatusText>Selection</StatusText>
        <Drop type="button" aria-label="Status options"><Icon w={9} h={10}><path className="f" d="M2 1V9L7 5z" /></Icon></Drop>
        <HScroll>
            <Icon w={8} h={10}><path d="M5.5 1 2.5 5 5.5 9" strokeWidth="1.4" /></Icon>
            <Thumb />
            <Icon w={8} h={10}><path d="M2.5 1 5.5 5 2.5 9" strokeWidth="1.4" /></Icon>
        </HScroll>
    </StatusBar>
)

const OffsetDialog = () => (
    <Dialog onSubmit={event => event.preventDefault()}>
        <h2>Offset Path</h2>
        <Fields>
            <label htmlFor="offset">Offset:</label>
            <TextInput id="offset" defaultValue="20 px" />
            <label htmlFor="joins">Joins:</label>
            <SelectBox>
                <select id="joins" defaultValue="Miter">
                    <option>Miter</option>
                    <option>Round</option>
                    <option>Bevel</option>
                </select>
                <Chevron />
                <Options>
                    {["Miter", "Round", "Bevel"].map(join => (
                        <Option key={join} $on={join === "Miter"}>
                            <Icon w={11} h={10}><path d="M1 5.5 4 8.5 10 1.5" strokeWidth="2" /></Icon>{join}
                        </Option>
                    ))}
                </Options>
            </SelectBox>
            <label htmlFor="limit">Miter limit:</label>
            <TextInput id="limit" defaultValue="4" />
        </Fields>
        <Footer>
            <Check><input type="checkbox" defaultChecked />Preview</Check>
            <Pill type="submit" $main>OK</Pill>
            <Pill type="button">Cancel</Pill>
        </Footer>
    </Dialog>
)

const App = () => (
    <>
        <GlobalStyle />
        <Window>
            <TopMenu />
            <Controls />
            <Body>
                <Toolbox />
                <Document>
                    <Tabs>
                        <Tab>Offset Path.ai* @ 100 % (RGB/Preview)
                            <button type="button" aria-label="Close tab"><Icon w={8} h={8}><path d="M1 1 7 7M7 1 1 7" strokeWidth="2" /></Icon></button>
                        </Tab>
                    </Tabs>
                    <Stage>
                        <Canvas><Artboard><Drawing /></Artboard></Canvas>
                        <VScroll>
                            <Icon w={10} h={10}><path d="M1.5 7 5 3.5 8.5 7" strokeWidth="1.4" /></Icon>
                            <Icon w={10} h={10}><path d="M1.5 3.5 5 7 8.5 3.5" strokeWidth="1.4" /></Icon>
                        </VScroll>
                    </Stage>
                    <Status />
                </Document>
                <RightDock />
            </Body>
            <OffsetDialog />
            <Svg width="0" height="0" aria-hidden="true">
                <linearGradient id="fade"><stop offset="0" stopColor="#333333" /><stop offset="1" stopColor="#d0d0d0" /></linearGradient>
            </Svg>
        </Window>
    </>
)

export default App;
